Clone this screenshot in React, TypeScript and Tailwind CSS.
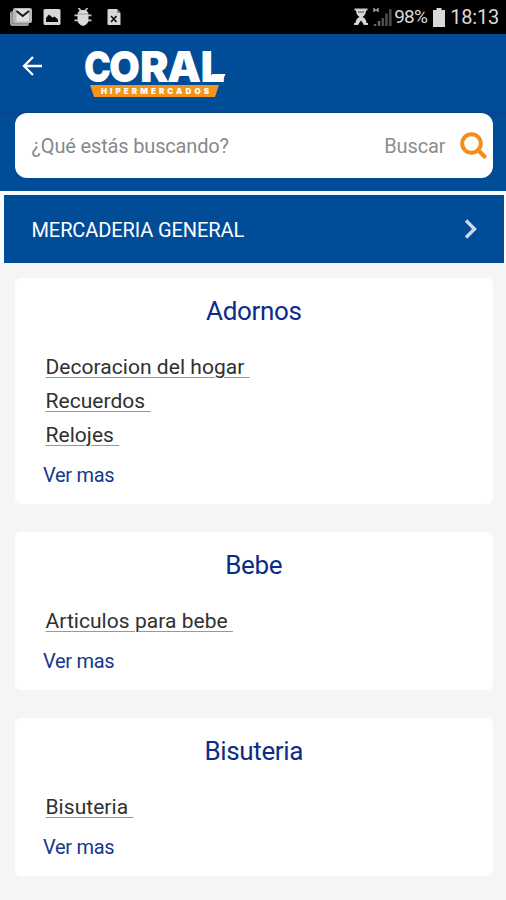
import React from "react";

type Section = { title: string; items: string[] };

const sections: Section[] = [
  { title: "Adornos", items: ["Decoracion del hogar", "Recuerdos", "Relojes"] },
  { title: "Bebe", items: ["Articulos para bebe"] },
  { title: "Bisuteria", items: ["Bisuteria"] },
];

function StatusBar() {
  return (
    <div className="flex h-[34px] items-center bg-black pl-[9px] pr-[7px] text-[#d8d8d8]">
      <svg width="24" height="20" viewBox="0 0 24 20">
        <rect x="1" y="4" width="19" height="15" rx="2.5" fill="#8e8e8e" />
        <rect x="4" y="1" width="19" height="15" rx="2" fill="#b9b9b9" />
        <rect x="7.5" y="2" width="12.5" height="12.5" fill="#dedede" />
        <path d="M7.5 4l6.2 5 6.3-5" stroke="#171717" strokeWidth="2" fill="none" />
        <path d="M2 6v10.5q0 1.500 1.500 1.500H19" stroke="#b4b4b4" strokeWidth="1" fill="none" />
      </svg>
      <svg className="ml-[10px]" width="18" height="18" viewBox="0 0 18 18">
        <rect x="0.500" y="1" width="17" height="16" rx="1.500" fill="#d8d8d8" />
        <path d="M3 14v-4l3-3.500 3.500 3 2-1 3.500 3V14z" fill="#080808" />
      </svg>
      <svg className="ml-[13px]" width="18" height="18" viewBox="0 0 18 18">
        <path d="M4.500 0l2.500 3M13.500 0L11 3M0.500 7.300h17M0.500 12.300h17" stroke="#c4c4c4" strokeWidth="1.800" />
        <path d="M3.500 7q0-5 5.500-5t5.500 5v5q0 4-5.500 6-5.500-2-5.500-6z" fill="#dadada" />
        <path d="M3.500 6h11" stroke="#8a8a8a" strokeWidth=".8" />
      </svg>
      <svg className="ml-[15px]" width="14" height="18" viewBox="0 0 14 18">
        <path d="M1.500 1H10l3.500 4v12h-12Q.5 17 .5 16V2q0-1 1-1z" fill="#d8d8d8" />
        <path d="M10 1v4h3.500" fill="#888" />
        <path d="M4 8l5.500 6M9.500 8L4 14" stroke="#151515" strokeWidth="1.800" />
      </svg>
      <div className="flex-1" />
      <svg className="mr-px" width="14" height="18" viewBox="0 0 14 18">
        <path d="M0.500 1.500h13M0 16h4.500M9.500 16H14" stroke="#ccc" strokeWidth="2.200" />
        <path d="M2 2h10q0 5-3.500 7 4 1.500 4 7H9.500L7 12.500 4.500 16h-3q0-5.500 4-7Q2 7 2 2z" fill="#d8d8d8" />
        <path d="M4 4h6" stroke="#444" strokeWidth="1" />
      </svg>
      <svg className="ml-[4px]" width="19" height="20" viewBox="0 0 19 20">
        <path d="M1 1v4M5 1v4M1 3h4" stroke="#aaa" strokeWidth="1.300" />
        <path d="M2 17v2M6 14v5" stroke="#666" strokeWidth="2.400" />
        <path d="M9.800 11v8M13.500 6.500V19M17.300 2v17" stroke="#4b4b4b" strokeWidth="2.600" />
      </svg>
      <span className="ml-[2px] w-[36px] whitespace-nowrap text-[19px] leading-[36px] tracking-[-0.8px]">98%</span>
      <svg className="ml-[3px]" width="12" height="19" viewBox="0 0 12 19">
        <path d="M3.500 0h5v2H12v17H0V2h3.500z" fill="#d8d8d8" />
      </svg>
      <span className="ml-[5px] mt-px whitespace-nowrap text-[20px] leading-[37px] tracking-[-0.2px]">18:13</span>
    </div>
  );
}

function Logo() {
  return (
    <svg width="150" height="72" viewBox="0 0 150 72" aria-label="Coral Hipermercados">
      <g fill="#fff" fontFamily="Inter, sans-serif" fontWeight="900" fontSize="43">
        <text transform="translate(0 48) scale(.84 1)">C</text>
        <text transform="translate(25 48) scale(.93 1)">O</text>
        <text transform="translate(56 48)">R</text>
        <text transform="translate(83 48)">A</text>
        <text transform="translate(116.500 48)">L</text>
      </g>
      <path d="M128 40h13.500l-3.500 8h-10z" fill="#fff" />
      <path d="M6 51h129l-4 12H10z" fill="#f3941c" />
      <text x="17" y="60.300" textLength="108" fill="#fff" fontFamily="Inter, sans-serif" fontWeight="900" fontSize="8">
        HIPERMERCADOS
      </text>
    </svg>
  );
}

export default function App() {
  return (
    <div className="flex h-[900px] w-[506px] flex-col overflow-hidden bg-[#f5f5f5] font-['Roboto',sans-serif]">
      <StatusBar />
      <header className="flex h-[157px] flex-col bg-[#004c97]">
        <div className="flex h-[79px] items-start border-b border-[#08438a] pl-[22px]">
          <svg className="mt-[22px]" width="22" height="20" viewBox="0 0 22 20">
            <path d="M20 10H2M11 1L2 10l9 9" stroke="#fff" strokeWidth="2.300" fill="none" />
          </svg>
          <div className="ml-[40px]">
            <Logo />
          </div>
        </div>
        <div className="ml-[14.5px] mr-[13px] flex h-[65px] items-center rounded-[12px] bg-white pl-[17px] pr-[6.5px]">
          <span className="text-[20px] tracking-[-0.16px] text-[#85898c]">¿Qué estás buscando?</span>
          <span className="ml-auto text-[20px] tracking-[-0.1px] text-[#8d8d8d]">Buscar</span>
          <svg className="ml-[14px]" width="27" height="28" viewBox="0 0 27 28">
            <circle cx="11.500" cy="11.500" r="9.300" stroke="#f3901d" strokeWidth="4" fill="none" />
            <path d="M18 18l6.500 6.500" stroke="#f3901d" strokeWidth="4.200" strokeLinecap="round" />
          </svg>
        </div>
      </header>
      <div className="bg-[#fafafc] pl-[3.5px] pr-[2.5px] pt-[4px]">
        <div className="flex h-[68px] items-center justify-between bg-[#004c97] pl-[28px] pr-[26px]">
          <span className="mt-px text-[20px] tracking-[-0.1px] text-white">MERCADERIA GENERAL</span>
          <svg width="14" height="22" viewBox="0 0 14 22">
            <path d="M2 2.500l8.500 8.500L2 19.500" stroke="#ccd8ed" strokeWidth="3.400" fill="none" />
          </svg>
        </div>
      </div>
      <main className="ml-[14.5px] mr-[13px] mt-[15px] flex flex-col gap-7">
        {sections.map((s) => (
          <section key={s.title} className="flex flex-col items-start rounded-[6px] bg-white pb-[11.5px]">
            <h2 className="mt-[15px] h-[36px] self-center text-[26px] leading-[36px] tracking-[-0.35px] text-[#0b2c8a]">{s.title}</h2>
            <ul className="mt-[20.5px]">
              {s.items.map((label) => (
                <li key={label} className="flex h-[34px] items-center pl-[31px] text-[21px] leading-[34px] text-[#303030]">
                  <span className="whitespace-pre tracking-[0.04px] underline decoration-[#999] decoration-1 underline-offset-[3px]">{label + " "}</span>
                </li>
              ))}
            </ul>
            <a className="mt-[6px] h-[35px] pl-[28.5px] text-[20px] leading-[35px] tracking-[-0.3px] text-[#14398c]">Ver mas</a>
          </section>
        ))}
      </main>
    </div>
  );
}
